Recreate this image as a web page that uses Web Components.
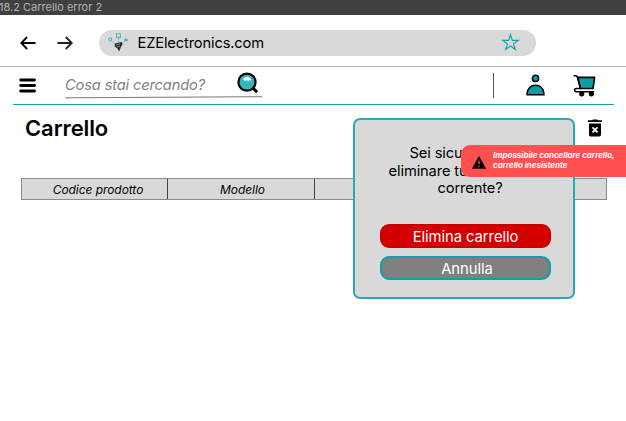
<!DOCTYPE html>
<html lang="it"><head><meta charset="utf-8"><title>Carrello</title>
<style>
html,body{margin:0;height:100%;overflow:hidden;background:#fff}
body{font-family:Inter,"Liberation Sans",sans-serif;color:#000;position:relative}
</style></head><body>
<ez-page></ez-page>
<script>
const define=(name,html)=>customElements.define(name,class extends HTMLElement{
  constructor(){super();const t=document.createElement('template');t.innerHTML=html;
    this.attachShadow({mode:'open'}).append(t.content.cloneNode(true));}
});
define('frame-title',`<style>:host{display:block;height:15px;background:#404040;color:#b3b3b3;font-size:11px;line-height:14px;white-space:nowrap;overflow:hidden;box-sizing:border-box}span{margin-left:-1px}</style><span><slot></slot></span>`);
define('browser-bar',`<style>
:host{display:flex;align-items:center;height:51.5px;box-sizing:border-box;border-bottom:1.5px solid #b5b5b5;padding:5px 0 0 20px}
.arr{width:16px;height:14px;flex:none;margin-right:21px}.arr+.arr{margin-right:26px}
.bar{display:flex;align-items:center;width:437px;height:26px;border-radius:13px;background:#d9d9d9;box-sizing:border-box;padding:0 16px 0 8px}
.logo{width:22px;height:22px;margin-right:8.5px}.url{flex:1;font-size:14.7px;letter-spacing:-.15px;line-height:26px;white-space:nowrap}.star{width:19px;height:19px}
</style>
<svg class="arr" viewBox="0 0 16 14" fill="none" stroke="#000" stroke-width="1.8"><path d="M15.5 7H1.2M7.2 1 1.2 7l6 6"/></svg>
<svg class="arr" viewBox="0 0 16 14" fill="none" stroke="#222" stroke-width="1.8"><path d="M.5 7h14.3M8.8 1l6 6-6 6"/></svg>
<div class="bar">
<svg class="logo" viewBox="0 0 22 22" fill="none"><g stroke="#39b5c0" stroke-width=".8"><rect x="9.5" y="1.7" width="4" height="3.4"/><path d="M9 5.8h5M2 6h2.5v3H2z"/><path d="M11.5 6.5v4M4.8 9.5l3.5 3M18 8.8l-3.2 3.5" stroke-dasharray="1.5 .7"/><ellipse cx="19" cy="8" rx="1.7" ry=".9" fill="#39b5c0"/></g><path d="M7.6 11.5l7-1.6 1 2-2 3.8-1.5 3.8-1.6-3-2.7-2z" fill="#2c2c2c"/><path d="M9 13l4-1.2M10 15l3-1" stroke="#aaa" stroke-width=".7"/></svg>
<span class="url"><slot></slot></span>
<svg class="star" viewBox="0 0 19 19" fill="none" stroke="#09a5af" stroke-width="1.15"><path d="M9.5 1.7l1.85 5.65h6l-4.85 3.5 1.85 5.7-4.85-3.5-4.85 3.5 1.85-5.7-4.85-3.5h6z"/></svg>
</div>`);
define('shop-nav',`<style>
:host{display:flex;align-items:center;height:38.5px;box-sizing:border-box;border-bottom:1.5px solid #0ba2aa;margin:0 12px 0 13px;padding-left:6px}
.menu{width:17px;height:15px;margin-right:29px}
.search{display:flex;align-items:center;width:197px;height:28px;margin-top:-3px;position:relative;box-sizing:border-box}
.ph{font-size:14.7px;letter-spacing:-.16px;font-style:italic;color:#858080;white-space:nowrap;margin-top:3px;flex:1}
.line{position:absolute;left:0;bottom:-1px;width:197px;height:3px}
.lens{width:22px;height:23px;margin:-1px 3px 0 0}
.sep{width:1px;height:25px;background:#555;margin-left:231px}
.user{width:19px;height:22px;margin-left:32px}.cart{width:23px;height:23px;margin-left:28px}
svg{flex:none}
</style>
<svg class="menu" viewBox="0 0 17 15" stroke="#000" stroke-width="2.9" stroke-linecap="round"><path d="M1.7 2h13.8M1.7 7.5h13.8M1.7 13h13.8"/></svg>
<div class="search"><span class="ph"><slot></slot></span>
<svg class="lens" viewBox="0 0 21 22"><path d="M15 15l4.2 4.4" stroke="#000" stroke-width="2.7"/><circle cx="9.5" cy="9.7" r="8.2" fill="#34b5bf" stroke="#000" stroke-width="2.1"/><path d="M5.5 7Q9.3 2.3 13.3 6.7v1.7l-1.3-.7-1.2 1.2-1.4-1.2-1.6 1z" fill="#fff"/></svg>
<svg class="line" viewBox="0 0 197 3"><path d="M0 1.8L197 .7" stroke="#777" fill="none"/></svg></div>
<span class="sep"></span>
<svg class="user" viewBox="0 0 19 22" fill="#0a9ea8" stroke="#000" stroke-width="1.5"><circle cx="9.5" cy="4.4" r="3.1"/><path d="M1.1 20.8v-1.5C1.4 14.5 4.8 11.2 9.5 11.2s8.1 3.3 8.4 8.1v1.5z"/></svg>
<svg class="cart" viewBox="0 0 23 23" fill="none" stroke="#000" stroke-width="1.6" stroke-linecap="round" stroke-linejoin="round"><path d="M5 3.4h16.6L20 14.5H7.4z" fill="#0a9ea8"/><path d="M1.2 1.7h1.6q1.1 0 1.5 1.2l3.1 11.6H3.2q-1.6 0-1.6 1.6t1.6 1.6h17.2"/><circle cx="8.7" cy="19.8" r="1.8" fill="#000"/><circle cx="18.4" cy="19.8" r="1.8" fill="#000"/></svg>`);
define('cart-head',`<style>:host{display:flex;align-items:center;justify-content:space-between;height:46px;padding:0 24px 0 25px}
h1{margin:0;font-size:22px;font-weight:600;line-height:26px;letter-spacing:-.1px}svg{width:14px;height:18px}</style><h1><slot></slot></h1>
<svg viewBox="0 0 14 18"><path d="M0 1.3h4L5 .5h4l1 .8h4v1.6H0zM1 4.5h12v11.2q0 1.8-1.8 1.8H2.8Q1 17.5 1 15.7z"/><path d="M4.5 8.3l5 5M9.5 8.3l-5 5" stroke="#fff" stroke-width="1.8"/></svg>`);
define('cart-columns',`<style>:host{display:grid;grid-template-columns:146px 147px 146px 1fr;margin:27px 19px 0 21px;height:22px;box-sizing:border-box;border:1px solid #8b8b8b;background:#d9d9d9}
::slotted(span){display:block;border-right:1px solid #444;text-align:center;font-size:12px;letter-spacing:-.06px;font-style:italic;height:20px;line-height:22px;white-space:nowrap;box-sizing:border-box;padding-left:3px}::slotted(span:first-child){padding-left:7px}::slotted(span:last-child){border:0}</style><slot></slot>`);
define('pill-button',`<style>:host{display:block;box-sizing:border-box;width:171px;height:24px;border:2px solid var(--edge);border-radius:9px;background:var(--fill);color:#fff;font-size:14.8px;letter-spacing:-.05px;line-height:22px;text-align:center;white-space:nowrap}</style><slot></slot>`);
define('confirm-dialog',`<style>:host{position:absolute;left:353px;top:118px;width:222px;height:181px;box-sizing:border-box;border:2px solid #2aabb3;border-radius:7px;background:#d9d9d9;display:flex;flex-direction:column;align-items:center;padding-top:25px}
p{margin:0 0 26px 12px;font-size:14.7px;letter-spacing:-.12px;line-height:17.5px;text-align:center;white-space:nowrap}
.a{--edge:#c90000;--fill:#d40000;margin-right:-3px;margin-bottom:8.5px}.b{--edge:#0aa3ac;--fill:#808080;margin-right:-3px;text-indent:3px}</style>
<p><slot></slot></p><pill-button class="a">Elimina carrello</pill-button><pill-button class="b">Annulla</pill-button>`);
define('error-toast',`<style>:host{position:absolute;left:461px;top:145px;width:165px;height:32px;box-sizing:border-box;border-radius:9px 0 0 9px;background:#ff5050;color:#fff;display:flex;align-items:center;padding-left:11px}
svg{width:14px;height:13px;flex:none;margin:2px 7px 0 0}span{font-size:8px;letter-spacing:-.03px;font-weight:700;font-style:italic;line-height:9.7px;white-space:nowrap}</style>
<svg viewBox="0 0 14 13"><path d="M7 .3l6.8 12.2H.2z" stroke="#000" stroke-width=".4" stroke-linejoin="round"/><path d="M6.3 4.8h1.4v3.5H6.3zM6.3 9.4h1.4v1.4H6.3z" fill="#ff5050"/></svg><span><slot></slot></span>`);
define('ez-page',`<style>:host{display:block;height:421px}</style>
<frame-title>18.2 Carrello error 2</frame-title><browser-bar>EZElectronics.com</browser-bar><shop-nav>Cosa stai cercando?</shop-nav>
<cart-head>Carrello</cart-head><cart-columns><span>Codice prodotto</span><span>Modello</span><span></span><span></span></cart-columns>
<confirm-dialog>Sei sicuro di voler<br>eliminare tutto il carrello<br>corrente?</confirm-dialog>
<error-toast>Impossibile cancellare carrello,<br>carrello inesistente</error-toast>`);
</script></body></html>
